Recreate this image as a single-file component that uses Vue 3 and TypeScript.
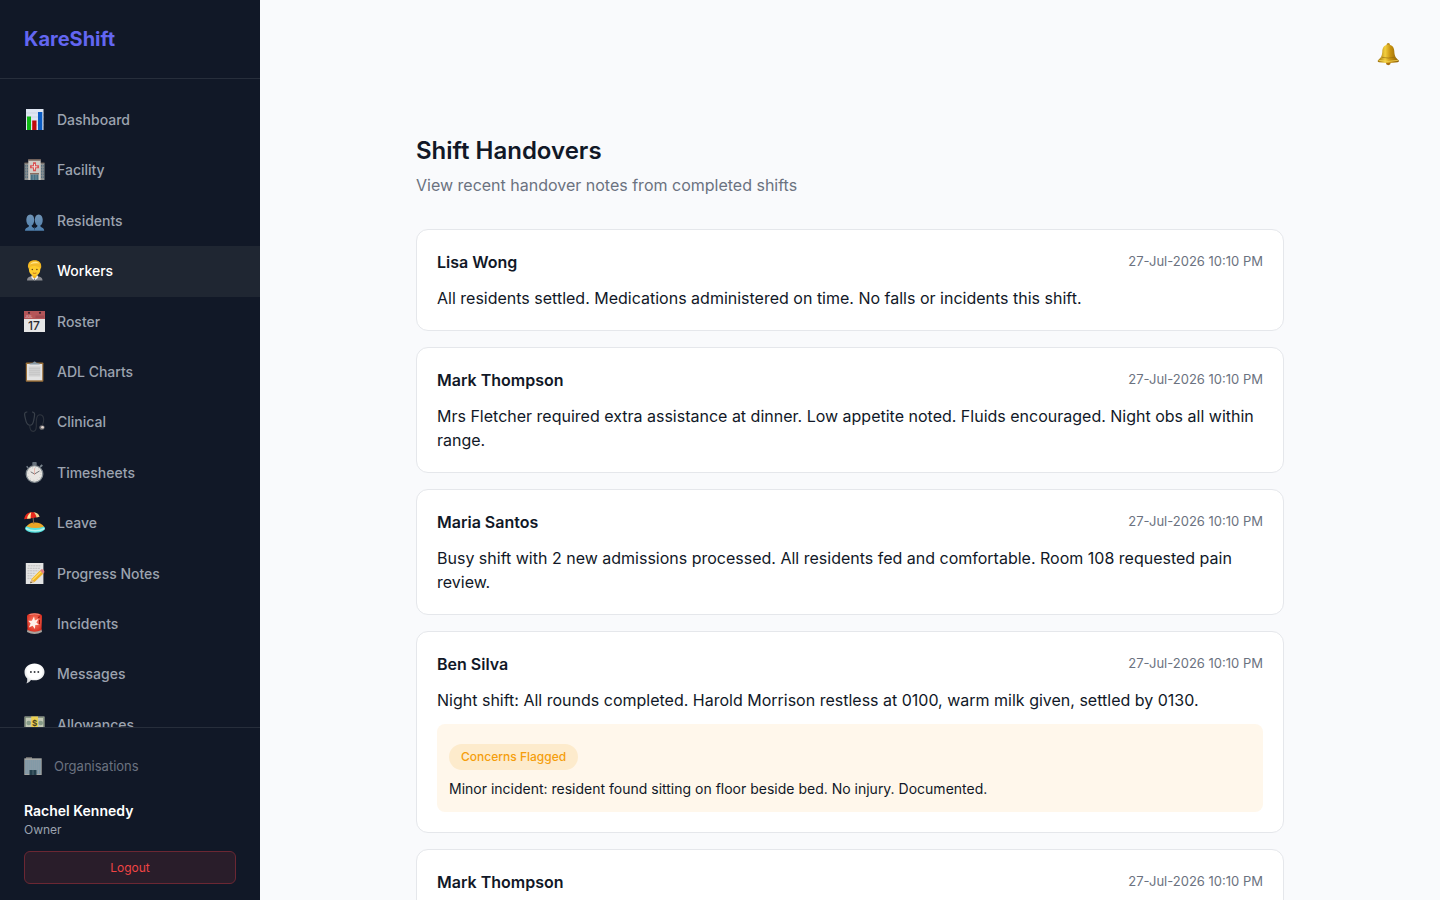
<script setup lang="ts">
interface NavItem {
  label: string
  icon: string
}

interface Handover {
  worker: string
  time: string
  notes: string
  concerns?: string
}

const navItems: NavItem[] = [
  { label: 'Dashboard', icon: 'chart' },
  { label: 'Facility', icon: 'hospital' },
  { label: 'Residents', icon: 'people' },
  { label: 'Workers', icon: 'worker' },
  { label: 'Roster', icon: 'calendar' },
  { label: 'ADL Charts', icon: 'clipboard' },
  { label: 'Clinical', icon: 'stethoscope' },
  { label: 'Timesheets', icon: 'stopwatch' },
  { label: 'Leave', icon: 'beach' },
  { label: 'Progress Notes', icon: 'memo' },
  { label: 'Incidents', icon: 'siren' },
  { label: 'Messages', icon: 'speech' },
  { label: 'Allowances', icon: 'money' },
]

const activeLabel = 'Workers'
const time = '27-Jul-2026 10:10 PM'

const handovers: Handover[] = [
  {
    worker: 'Lisa Wong',
    time,
    notes: 'All residents settled. Medications administered on time. No falls or incidents this shift.',
  },
  {
    worker: 'Mark Thompson',
    time,
    notes:
      'Mrs Fletcher required extra assistance at dinner. Low appetite noted. Fluids encouraged. Night obs all within range.',
  },
  {
    worker: 'Maria Santos',
    time,
    notes:
      'Busy shift with 2 new admissions processed. All residents fed and comfortable. Room 108 requested pain review.',
  },
  {
    worker: 'Ben Silva',
    time,
    notes: 'Night shift: All rounds completed. Harold Morrison restless at 0100, warm milk given, settled by 0130.',
    concerns: 'Minor incident: resident found sitting on floor beside bed. No injury. Documented.',
  },
  {
    worker: 'Mark Thompson',
    time,
    notes: '',
  },
]
</script>

<template>
  <div class="app">
    <svg class="defs" aria-hidden="true">
      <defs>
        <linearGradient id="g-people" x1="0" y1="0" x2="0" y2="1">
          <stop offset="0" stop-color="#6f93b5" />
          <stop offset="1" stop-color="#4e7fae" />
        </linearGradient>
        <linearGradient id="g-bell" x1="0" y1="0" x2="1" y2="0">
          <stop offset="0" stop-color="#9a6b08" />
          <stop offset="0.35" stop-color="#f3cf3f" />
          <stop offset="0.6" stop-color="#c8930f" />
          <stop offset="1" stop-color="#8b5d06" />
        </linearGradient>
        <radialGradient id="g-bubble" cx="0.5" cy="0.4" r="0.6">
          <stop offset="0.6" stop-color="#ffffff" />
          <stop offset="1" stop-color="#cfd1d4" />
        </radialGradient>
        <radialGradient id="g-siren" cx="0.5" cy="0.45" r="0.6">
          <stop offset="0" stop-color="#ff8a70" />
          <stop offset="1" stop-color="#d92a1c" />
        </radialGradient>
      </defs>

      <symbol id="i-chart" viewBox="0 0 21 21">
        <rect x="2" y="0" width="17.500" height="21" fill="#dfe6f2" />
        <path d="M2 4h17.500M2 8h17.500M2 12h17.500M2 16h17.500" stroke="#c3cede" stroke-width="0.600" />
        <rect x="3" y="7.500" width="4" height="13.500" fill="#0fb814" />
        <rect x="8.200" y="11.500" width="4.300" height="9.500" fill="#c00a0c" />
        <rect x="14" y="3" width="4.300" height="18" fill="#0a5cc4" />
      </symbol>

      <symbol id="i-hospital" viewBox="0 0 21 21">
        <rect x="0.500" y="4" width="20" height="17" fill="#8d9191" />
        <path d="M0.500 4h4M16.500 4h4" stroke="#6b5a50" />
        <path d="M1.700 6v13M3.500 6v13M17.500 6v13M19.300 6v13" stroke="#587080" stroke-width="1.100" stroke-dasharray="1.800 1" />
        <rect x="4.300" y="0.500" width="12.400" height="20.500" fill="#cfcbc5" />
        <rect x="4.300" y="0.200" width="12.400" height="1.500" fill="#735f55" />
        <path d="M10.500 3.300v9M6 7.800h9" stroke="#d95454" stroke-width="3" />
        <path d="M10.500 5v5.600M7.700 7.800h5.600" stroke="#ecdcd8" stroke-width="1" />
        <rect x="6" y="14" width="9" height="1.500" fill="#8b6d60" />
        <rect x="6.500" y="15.500" width="8" height="5.500" fill="#476e80" />
        <path d="M9.200 15.500V21M12 15.500V21" stroke="#92a9b2" stroke-width="0.600" />
      </symbol>

      <symbol id="i-people" viewBox="0 0 21 21">
        <path d="M1 20.800c0-3.800 4-2.500 4-5.200-3.500-1.500-4-11.200 1.300-11.200s4.800 9.700 1.300 11.200c0 2.700 3.400 1.400 3.400 5.200z" fill="url(#g-people)" />
        <path d="M10 20.800c0-3.800 3.500-2.500 3.500-5.200-3.500-1.500-4-11.200 1.200-11.200s5 9.700 1.600 11.200c0 2.700 3.900 1.400 3.900 5.200z" fill="url(#g-people)" />
        <path d="M10.500 17v3.800" stroke="#2d4f70" stroke-width="0.600" />
      </symbol>

      <symbol id="i-worker" viewBox="0 0 21 21">
        <path d="M3 20.500c0-3.500 3-4.500 7.500-4.500s8 1 8 4.500z" fill="#8a8b90" />
        <path d="M7.500 15.500h6.400v2.500l-3.200 2.500-3.200-2.500z" fill="#f1f1f1" />
        <path d="M8.500 13h4v4l-2 1.500-2-1.500z" fill="#eeb01e" />
        <path d="M4 7.500C3.300 2 7 .2 10.800.2S18.200 2.500 17 8.500z" fill="#f1b31a" />
        <ellipse cx="10.600" cy="9.500" rx="5.700" ry="6.300" fill="#ffcd2e" />
        <path d="M4.600 9C3.600 3 7 .8 10.800.8S17.500 3 16.700 9C16 6.800 14 6.600 11 6 8 5.600 6 6.400 4.600 9z" fill="#f3bb2a" />
        <path d="M5.800 4.600c2-3.600 7.400-3.900 9.600-1-3.200-.6-6.600-.2-9.600 1z" fill="#ffe58a" />
        <circle cx="8.300" cy="9.500" r="0.700" fill="#553a15" />
        <circle cx="12.900" cy="9.500" r="0.700" fill="#553a15" />
        <path d="M8.800 13q1.800.8 3.600 0" stroke="#b35a17" stroke-width="0.800" fill="none" />
        <path d="M10.600 17.500l-.7 3h1.400z" fill="#66686e" />
      </symbol>

      <symbol id="i-calendar" viewBox="0 0 21 21">
        <rect width="21" height="21" fill="#e6e6e6" />
        <rect width="21" height="8" fill="#b45558" />
        <rect x="11.500" y="4.500" width="8.500" height="2.500" fill="#a14b50" />
        <circle cx="5" cy="1.800" r="1.100" fill="#3b2430" />
        <circle cx="16" cy="1.800" r="1.100" fill="#3b2430" />
      </symbol>

      <symbol id="i-clipboard" viewBox="0 0 21 21">
        <rect x="1.800" y="1.500" width="17.600" height="19.300" rx="0.800" fill="#9a6f38" />
        <rect x="3" y="3" width="15.200" height="16.300" fill="#e3e3e3" />
        <rect x="4.800" y="5.500" width="11.600" height="10" fill="#d0d0d0" />
        <path d="M5 7.500h11M5 9.500h11M5 11.500h11M5 13.500h11" stroke="#c4c4c4" stroke-width="0.700" />
        <path d="M5.500 3.600V2.400L9 1.800Q10.600-.8 12.200 1.800l3.500.6v1.200z" fill="#8797a3" />
      </symbol>

      <symbol id="i-stethoscope" viewBox="0 0 21 21" fill="none">
        <path d="M3.300 1C-.5.800.5 4 1.600 8.500 3 16 8.500 16 9.700 9.500 10.800 4 11.500.800 8 1" stroke="#3a414b" stroke-width="1.200" />
        <path d="M5.700 14.500C6 22 12.500 22.500 12.300 15 12 7 13 3.800 16 3.800c4 0 4.500 5 2.500 10" stroke="#2d333d" stroke-width="1.100" />
        <ellipse cx="18" cy="16.500" rx="2.600" ry="2.300" fill="#6f6d70" />
        <circle cx="18.500" cy="16.200" r="1.300" fill="#e7d9d2" />
      </symbol>

      <symbol id="i-stopwatch" viewBox="0 0 21 21">
        <rect x="8.300" y="0" width="4.400" height="3.500" rx="0.800" fill="#67717c" />
        <path d="M16 5l2.300-2M2.800 5.500l1-1" stroke="#77818b" stroke-width="1.800" />
        <circle cx="10.500" cy="12" r="8.300" fill="#e8e6e2" stroke="#81898f" stroke-width="1.300" />
        <circle cx="10.500" cy="12" r="6.400" fill="none" stroke="#b5b5b5" stroke-width="0.900" stroke-dasharray="0.700 2.650" />
        <path d="M10.500 12L6.700 9.800M10.500 12l5-3" stroke="#55585c" stroke-width="0.800" />
        <path d="M10.500 13V6.200" stroke="#e59a8d" stroke-width="0.600" />
      </symbol>

      <symbol id="i-beach" viewBox="0 0 21 21">
        <ellipse cx="11" cy="16.500" rx="10" ry="4.200" fill="#55e0df" />
        <path d="M2 15.500q9 5 18.500 0v2q-9 4-18.500 0z" fill="#b3f4ed" />
        <path d="M2.500 14.500Q6 10 11 10.500q6 0 9 4-8 3-17.500 0z" fill="#eca526" />
        <path d="M9 5l.8 7" stroke="#9b704f" stroke-width="0.900" />
        <path d="M.2 7.300C.8 2 4.500-.2 8.500.2c4 0 6.700 2.300 7 4.500L9 6z" fill="#e8271c" />
        <path d="M3 6.800C3.500 3.500 5 1.300 7.300.3 6.800 2 6.600 4.500 6.700 6.400z" fill="#ffe9a0" />
        <path d="M9.500.2c3.500.3 5.700 2.300 6 4.500l-3 .7C12.300 3.500 11.300 1.500 9.500.2z" fill="#ead794" />
      </symbol>

      <symbol id="i-memo" viewBox="0 0 21 21">
        <rect x="1.800" y="0" width="17.600" height="21" fill="#e3e3e3" />
        <path d="M4 2.800h13M3.500 5.300h13M3.500 7.800h11M3.500 10.300h8M3.500 12.800h6M3.500 15.300h4" stroke="#b5b5b5" stroke-width="0.800" stroke-dasharray="2 0.600" />
        <path d="M7.500 16L16 7.500l3.200 3.200-8.700 8.300-4.200 1.200z" fill="#f0b323" />
        <path d="M8.500 17l8.500-8.200" stroke="#ffdc62" stroke-width="1.200" />
        <path d="M16 7.500l1.700-1.400q2.300.2 2.800 2.800l-1.300 1.800z" fill="#df7f82" />
        <path d="M7.500 16l3 3-4.200 1.200z" fill="#dfb98c" />
        <path d="M6.800 18.500l1.100 1.200-1.600.5z" fill="#333333" />
      </symbol>

      <symbol id="i-siren" viewBox="0 0 21 21">
        <path d="M3.500 16.500h14l.5 2.500q-7.500 3.800-15 0z" fill="#a9a29d" />
        <path d="M3 3Q3.500.5 10.500.3 17.500.5 18 3l-.5 14q-7 3.500-14 0z" fill="url(#g-siren)" />
        <path d="M5.500 1.500q5-1.300 10 0" stroke="#f7a493" stroke-width="0.800" fill="none" />
        <path d="M10 3.500l.9 3.900 3.800-1.600-2.400 3.700 2.700 2.300-3.700.3-.4 4-2.300-3.300-3.700 1.600 1.700-3.800-2.400-2.800 3.700-.1z" fill="#fff1ea" />
        <path d="M14 4.500l2-.8M15.500 7v4" stroke="#8f1814" stroke-width="1.100" />
      </symbol>

      <symbol id="i-speech" viewBox="0 0 21 21">
        <path d="M10.500.4c5.800 0 10 3.700 10 8.500s-4.200 8.400-10 8.400q-2 0-3.500-.4-1.500 2.500-4.500 3.500 1-2.500.7-4.900C1.500 13.800.5 11.600.5 8.900.5 4.100 4.700.4 10.500.4z" fill="url(#g-bubble)" />
        <circle cx="6.900" cy="9" r="0.950" fill="#35383d" />
        <circle cx="10.600" cy="9" r="0.950" fill="#35383d" />
        <circle cx="14.300" cy="9" r="0.950" fill="#35383d" />
      </symbol>

      <symbol id="i-money" viewBox="0 0 21 21">
        <rect x="0.500" y="2.500" width="20" height="14" fill="#c3c8b5" />
        <rect x="1.500" y="3.500" width="18" height="12" fill="none" stroke="#71826d" stroke-width="0.700" />
        <circle cx="4.700" cy="9" r="2.300" fill="#869b88" />
        <circle cx="16.700" cy="9" r="2.300" fill="#869b88" />
        <rect x="7.200" y="2.500" width="6.800" height="14" fill="#ecd052" />
      </symbol>

      <symbol id="i-office" viewBox="0 0 18 18">
        <path d="M2 .3h6v1.500H2z" fill="#8c8983" />
        <rect x="0.300" y="1.300" width="17.400" height="16.700" fill="#a3a5a3" />
        <path d="M1.200 4h15.800M1.200 6h15.800M1.200 8h15.800M1.200 10h15.800M1.200 12h15.800M1.200 14h4.300M12.500 14h4.500M1.200 16h4.300M12.500 16h4.500" stroke="#6f93ab" stroke-width="1.400" stroke-dasharray="1.500 0.500" />
        <rect x="5.500" y="13" width="7" height="5" fill="#233f4c" />
        <path d="M9 13V18" stroke="#6e838d" stroke-width="0.600" />
      </symbol>

      <symbol id="i-bell" viewBox="-1 0 24 24">
        <circle cx="11.300" cy="20.800" r="2.400" fill="#a86e10" />
        <circle cx="11.300" cy="2.800" r="1.700" fill="#b98a1a" />
        <path d="M11.300 2.800c3.800 0 5.900 2.700 6 6.500.1 4.600 1.500 6.700 4.500 9.200q.5 1.500-1.200 1.700-9.300 1.500-18.600 0-1.700-.2-1.200-1.700c3-2.500 4.400-4.600 4.500-9.200.1-3.800 2.200-6.500 6-6.500z" fill="url(#g-bell)" />
        <path d="M1.500 18.300q9.800 2.200 19.600 0" stroke="#f5d75b" stroke-width="0.800" fill="none" />
        <path d="M5 15.300q6.300 1.500 12.600 0" stroke="#95690c" stroke-width="0.600" fill="none" />
      </symbol>
    </svg>

    <aside class="sidebar">
      <div class="brand">KareShift</div>
      <nav class="nav" aria-label="Main">
        <a
          v-for="item in navItems"
          :key="item.label"
          href="#"
          class="nav-item"
          :class="{ active: item.label === activeLabel }"
        >
          <svg class="nav-icon" viewBox="0 0 21 21" aria-hidden="true">
            <use :href="`#i-${item.icon}`" width="21" height="21" />
            <template v-if="item.icon === 'calendar'">
              <text x="1" y="7" font-size="4" font-weight="700" fill="#d9a0a1">JUL</text>
              <text x="10" y="19" font-size="12" font-weight="500" text-anchor="middle" fill="#2b2b2e">17</text>
            </template>
            <text
              v-if="item.icon === 'money'"
              x="10.500"
              y="12"
              font-size="8"
              font-weight="700"
              text-anchor="middle"
              fill="#4a431d"
            >$</text>
          </svg>
          <span>{{ item.label }}</span>
        </a>
      </nav>
      <div class="side-footer">
        <a href="#" class="org-link">
          <svg class="org-icon" aria-hidden="true"><use href="#i-office" /></svg>
          <span>Organisations</span>
        </a>
        <div class="user-name">Rachel Kennedy</div>
        <div class="user-role">Owner</div>
        <button type="button" class="logout">Logout</button>
      </div>
    </aside>

    <main class="main">
      <header class="topbar">
        <button type="button" class="bell" aria-label="Notifications">
          <svg class="bell-icon" aria-hidden="true"><use href="#i-bell" /></svg>
        </button>
      </header>
      <section class="content">
        <h1>Shift Handovers</h1>
        <p class="subtitle">View recent handover notes from completed shifts</p>
        <div class="cards">
          <article v-for="(h, i) in handovers" :key="i" class="card">
            <div class="card-head">
              <h2>{{ h.worker }}</h2>
              <time>{{ h.time }}</time>
            </div>
            <p class="notes">{{ h.notes }}</p>
            <div v-if="h.concerns" class="concerns">
              <span class="badge">Concerns Flagged</span>
              <p>{{ h.concerns }}</p>
            </div>
          </article>
        </div>
      </section>
    </main>
  </div>
</template>

<style>
body {
  margin: 0;
  background: #f9fafc;
}
</style>

<style scoped>
* {
  box-sizing: border-box;
}

.app {
  display: flex;
  height: 100vh;
  overflow: hidden;
  background: #f9fafc;
  color: #111827;
  font-family: Inter, sans-serif;
  font-size: 16px;
  line-height: 24px;
}

.defs {
  position: absolute;
  width: 0;
  height: 0;
}

h1,
h2,
p {
  margin: 0;
}

.sidebar {
  display: flex;
  flex-direction: column;
  flex: none;
  width: 260px;
  background: #111827;
}

.brand {
  padding: 24px;
  border-bottom: 1px solid #272e3b;
  color: #6366f1;
  font-size: 20px;
  font-weight: 700;
  line-height: 30px;
}

.nav {
  flex: 1;
  min-height: 0;
  padding-top: 16px;
  overflow: hidden;
}

.nav-item {
  display: flex;
  align-items: flex-start;
  gap: 12px;
  padding: 14px 24px;
  color: #9ca3af;
  font-size: 14px;
  font-weight: 500;
  line-height: 1.6;
  text-decoration: none;
}

.nav-item.active {
  background: #1f2632;
  color: #ffffff;
}

.nav-icon {
  flex: none;
  width: 21px;
  height: 21px;
}

.side-footer {
  padding: 16px 24px;
  border-top: 1px solid #272e3b;
}

.org-link {
  display: flex;
  align-items: center;
  gap: 12px;
  padding: 12px 0;
  margin-bottom: 12px;
  color: #6b7280;
  font-size: 13px;
  line-height: 20px;
  text-decoration: none;
}

.org-icon {
  width: 18px;
  height: 18px;
}

.user-name {
  color: #ffffff;
  font-size: 14px;
  font-weight: 600;
  line-height: 22px;
}

.user-role {
  color: #9ca3af;
  font-size: 12px;
  line-height: 16px;
}

.logout {
  width: 100%;
  margin-top: 13px;
  padding: 8px;
  border: 1px solid #6b2733;
  border-radius: 6px;
  background: #291d2a;
  color: #ef4444;
  font-family: inherit;
  font-size: 12px;
  line-height: 15px;
}

.main {
  flex: 1;
  min-width: 0;
  padding: 40px;
}

.topbar {
  display: flex;
  justify-content: flex-end;
  height: 96px;
}

.bell {
  width: 24px;
  height: 28px;
  padding: 0;
  border: 0;
  background: none;
}

.bell-icon {
  display: block;
  width: 24px;
  height: 24px;
}

.content {
  max-width: 900px;
  margin: 0 auto;
  padding: 0 16px;
}

h1 {
  font-size: 24px;
  font-weight: 600;
  line-height: 29px;
}

.subtitle {
  margin-top: 8px;
  color: #6b7280;
}

.cards {
  display: flex;
  flex-direction: column;
  gap: 16px;
  margin-top: 32px;
}

.card {
  padding: 20px;
  border: 1px solid #e5e7eb;
  border-radius: 12px;
  background: #ffffff;
}

.card-head {
  display: flex;
  justify-content: space-between;
  margin-bottom: 12px;
}

h2 {
  font-size: 16px;
  font-weight: 600;
}

time {
  color: #6b7280;
  font-size: 13px;
  line-height: 22px;
}

.notes {
  min-height: 24px;
}

.concerns {
  display: flex;
  flex-direction: column;
  align-items: flex-start;
  gap: 8px;
  margin-top: 12px;
  padding: 20px 12px 12px;
  border-radius: 8px;
  background: #fff7eb;
  font-size: 14px;
  line-height: 22px;
}

.badge {
  padding: 4px 12px;
  border-radius: 13px;
  background: #fdebcc;
  color: #f59e0b;
  font-size: 12px;
  font-weight: 500;
  line-height: 18px;
}
</style>
